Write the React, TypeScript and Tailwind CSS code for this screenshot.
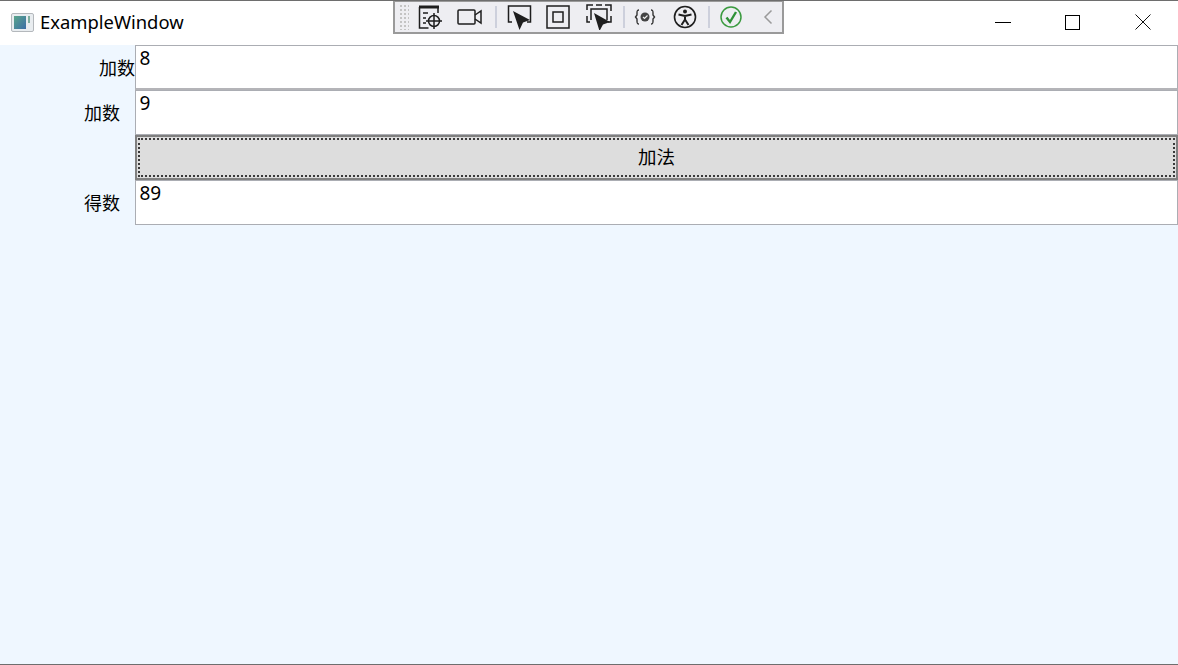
const FONT = "font-['Noto_Sans','Noto_Sans_CJK_SC',sans-serif]";

function AppIcon() {
  return (
    <svg width="23" height="19" viewBox="0 0 23 19">
      <rect x="0.5" y="0.5" width="22" height="18" rx="1.5" fill="#e9edf0" stroke="#b4b8bc" />
      <defs>
        <linearGradient id="pane" x1="0" y1="0" x2="1" y2="1">
          <stop offset="0" stopColor="#5aa58a" />
          <stop offset="1" stopColor="#3c6fa8" />
        </linearGradient>
      </defs>
      <rect x="3" y="3" width="12" height="13" fill="url(#pane)" />
      <rect x="17" y="3" width="2" height="7" fill="#7fae9f" />
    </svg>
  );
}

function Sep() {
  return <div className="mx-[5px] h-[22px] w-[2px] shrink-0 bg-[#cdd0dc]" />;
}

function Toolbar() {
  const stroke = "#1e1e1e";
  return (
    <div className="absolute left-[393px] top-0 flex h-[33px] w-[391px] items-center border-2 border-t-[1px] border-[#9a9a9a] bg-[#eeeef2]">
      <div className="ml-[4px] h-[26px] w-[10px] shrink-0 bg-[radial-gradient(#c4c4c4_1.2px,transparent_1.2px)] bg-[length:4px_4px]" />
      <svg className="ml-[9px] shrink-0" width="26" height="28" viewBox="0 0 26 28" fill="none" stroke={stroke} strokeWidth="1.5">
        <path d="M1 4h20" strokeWidth="3" />
        <path d="M1.5 4v21h9M20 5v5M5 10h5M5 15h3M5 20h3" />
        <circle cx="16" cy="18" r="5.5" />
        <path d="M16 10v16M8 18h16" />
      </svg>
      <svg className="ml-[13px] shrink-0" width="26" height="18" viewBox="0 0 26 18" fill="none" stroke={stroke} strokeWidth="1.5">
        <rect x="1" y="2" width="17" height="14" rx="1" />
        <path d="M18 7l6-4v12l-6-4" />
      </svg>
      <div className="ml-[7px]"><Sep /></div>
      <svg className="ml-[5px] shrink-0" width="26" height="26" viewBox="0 0 26 26" fill="none" stroke={stroke} strokeWidth="1.5">
        <path d="M5 18H1.5V2h22v16H20" />
        <path d="M6 7l17 9-7 2.5 -3.500 7.500z" fill="#1e1e1e" stroke="none" />
      </svg>
      <svg className="ml-[13px] shrink-0" width="24" height="24" viewBox="0 0 24 24" fill="none" stroke={stroke} strokeWidth="1.5">
        <rect x="1" y="1" width="22" height="22" />
        <rect x="7" y="7" width="10" height="10" />
      </svg>
      <svg className="ml-[16px] shrink-0" width="26" height="26" viewBox="0 0 26 26" fill="none" stroke={stroke} strokeWidth="1.5">
        <path d="M1 6V1h6M19 1h6v6M1 12v6h3M25 12v6h-3M10 1h6" />
        <path d="M5 16V5h16v11" />
        <path d="M8 9l16 9-7 2.500-3.500 6.500z" fill="#1e1e1e" stroke="none" />
      </svg>
      <div className="ml-[6px]"><Sep /></div>
      <svg className="ml-[4px] shrink-0" width="22" height="18" viewBox="0 0 22 18" fill="none" stroke="#333" strokeWidth="1.4">
        <path d="M5 2C3 2 3 3 3 5v2L1.500 9 3 11v2c0 2 0 3 2 3M17 2c2 0 2 1 2 3v2l1.500 2L19 11v2c0 2 0 3-2 3" />
        <circle cx="11" cy="9" r="4.500" fill="#444" stroke="none" />
        <path d="M9 9l1.500 1.500L13.500 7.500" stroke="#eee" strokeWidth="1.200" />
      </svg>
      <svg className="ml-[17px] shrink-0" width="24" height="24" viewBox="0 0 24 24" fill="none" stroke={stroke} strokeWidth="2">
        <circle cx="12" cy="12" r="10.500" strokeWidth="1.600" />
        <circle cx="12" cy="6.500" r="2" fill="#1e1e1e" stroke="none" />
        <path d="M5.500 9.500L12 11l6.500-1.500M12 11v3.500M12 14.500L8.500 20M12 14.500l3.500 5.500" />
      </svg>
      <div className="ml-[6px]"><Sep /></div>
      <svg className="ml-[5px] shrink-0" width="22" height="22" viewBox="0 0 22 22" fill="none">
        <circle cx="11" cy="11" r="10" stroke="#3a9a3f" strokeWidth="1.500" />
        <path d="M6.500 11.500l3.500 4.500 6-10" stroke="#2f9137" strokeWidth="2.400" />
      </svg>
      <svg className="ml-[21px] shrink-0" width="10" height="16" viewBox="0 0 10 16" fill="none" stroke="#9a9a9a" strokeWidth="1.500">
        <path d="M8.500 1.500L2 8l6.500 6.500" />
      </svg>
    </div>
  );
}

function TitleBar() {
  return (
    <div className="relative flex h-[45px] items-center border-t border-[#6e6e6e] bg-white">
      <div className="ml-[11px] flex items-center pb-[2px]">
        <AppIcon />
      </div>
      <span className="ml-[6px] pb-[2px] text-[18.4px] leading-none text-black">ExampleWindow</span>
      <Toolbar />
      <div className="ml-auto flex items-center pb-[2px]">
        <div className="flex w-[70px] justify-center">
          <div className="h-px w-[16px] bg-black" />
        </div>
        <div className="flex w-[70px] justify-center pr-[2px]">
          <div className="size-[15px] border border-black" />
        </div>
        <div className="flex w-[70px] justify-center">
          <svg width="16" height="16" viewBox="0 0 16 16" stroke="#111" strokeWidth="1" fill="none">
            <path d="M0.5 0.5l15 15M15.500 0.5l-15 15" />
          </svg>
        </div>
      </div>
    </div>
  );
}

function Field({ value, className }: { value: string; className?: string }) {
  return (
    <div className={`h-[45px] border border-[#abadb3] bg-white pl-[3.5px] text-[19px] leading-[24px] text-black ${className ?? ""}`}>
      {value}
    </div>
  );
}

export default function App() {
  return (
    <div className={`flex h-[665px] w-[1178px] flex-col overflow-hidden border-b border-[#6e6e6e] bg-[#eff7ff] ${FONT}`}>
      <TitleBar />
      <div className="grid grid-cols-[135px_1fr] text-[18px] text-black">
        <div className="flex h-[45px] items-center justify-end pt-px">加数</div>
        <Field value="8" className="border-b-2 border-b-[#b4b4b8]" />
        <div className="flex h-[45px] items-center justify-end pr-[15px] pt-px">加数</div>
        <Field value="9" />
        <div />
        <div className="h-[45px] border-2 border-[#808080] bg-[#dddddd] p-px">
          <div className="flex h-full items-center justify-center border-2 border-dotted border-[#3a3a3a] pb-[2px] text-[18.500px]">
            加法
          </div>
        </div>
        <div className="flex h-[45px] items-center justify-end pr-[15px] pt-px">得数</div>
        <Field value="89" />
      </div>
    </div>
  );
}
